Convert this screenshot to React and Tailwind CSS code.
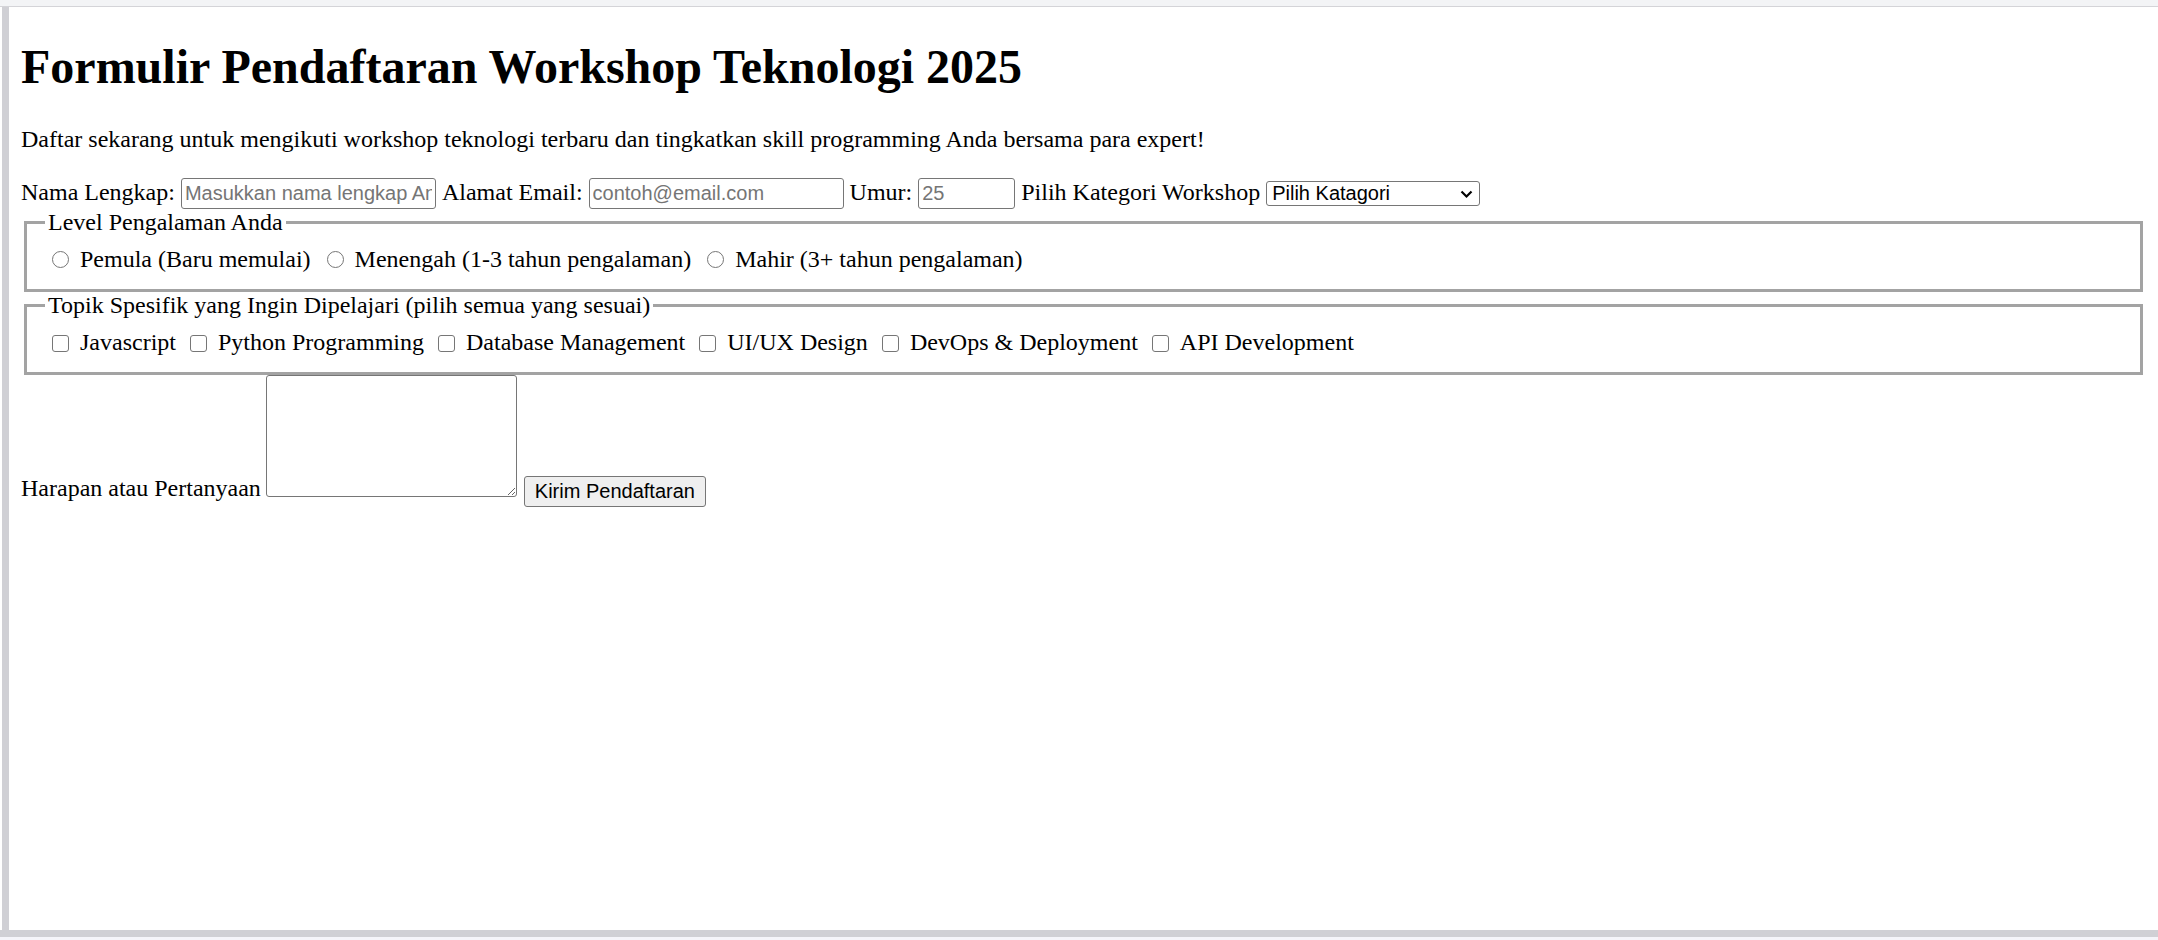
import { useState } from 'react';

const levels = [
  { id: 'pemula', label: 'Pemula (Baru memulai)' },
  { id: 'menengah', label: 'Menengah (1-3 tahun pengalaman)' },
  { id: 'mahir', label: 'Mahir (3+ tahun pengalaman)' },
];

const topics = [
  'Javascript',
  'Python Programming',
  'Database Management',
  'UI/UX Design',
  'DevOps & Deployment',
  'API Development',
];

export default function App() {
  const [level, setLevel] = useState('');
  const [picked, setPicked] = useState([]);

  const toggle = (t) =>
    setPicked((prev) => (prev.includes(t) ? prev.filter((x) => x !== t) : [...prev, t]));

  return (
    <div className="h-[940px] w-full flex flex-col bg-white overflow-hidden">
      {/* browser chrome */}
      <div className="h-[6px] bg-[#f3f4f6]" />
      <div className="h-px bg-[#d4d4d8]" />

      <div className="flex flex-1 min-h-0">
        <div className="w-[2px] bg-white" />
        <div className="w-[7px] bg-[#d0d0d5]" />

        {/* page */}
        <div className="flex-1 px-[12px] text-[24px] leading-[27.6px] text-black font-['Liberation_Serif','Times_New_Roman',serif]">
          <h1 className="mt-[32px] text-[48px] leading-[55px] font-bold">
            Formulir Pendaftaran Workshop Teknologi 2025
          </h1>
          <p className="mt-[32px]">
            Daftar sekarang untuk mengikuti workshop teknologi terbaru dan tingkatkan skill programming Anda bersama para expert!
          </p>

          <form onSubmit={(e) => e.preventDefault()}>
            {/* row 1 */}
            <div className="mt-[24px] flex items-center gap-[6px] h-[31px]">
              <label htmlFor="nama">Nama Lengkap:</label>
              <input
                id="nama"
                type="text"
                placeholder="Masukkan nama lengkap Anda"
                className="w-[255px] h-[31px] px-[3px] border border-[#767676] rounded-[3px] text-[20px] font-['Liberation_Sans',Arial,sans-serif] placeholder:text-[#757575]"
              />
              <label htmlFor="email">Alamat Email:</label>
              <input
                id="email"
                type="email"
                placeholder="contoh@email.com"
                className="w-[255px] h-[31px] px-[3px] border border-[#767676] rounded-[3px] text-[20px] font-['Liberation_Sans',Arial,sans-serif] placeholder:text-[#757575]"
              />
              <label htmlFor="umur">Umur:</label>
              <input
                id="umur"
                type="number"
                placeholder="25"
                className="w-[97px] h-[31px] px-[3px] border border-[#767676] rounded-[3px] text-[20px] font-['Liberation_Sans',Arial,sans-serif] placeholder:text-[#757575] [appearance:textfield]"
              />
              <label htmlFor="kategori">Pilih Kategori Workshop</label>
              <span className="relative inline-flex">
                <select
                  id="kategori"
                  className="w-[214px] h-[25px] appearance-none pl-[5px] pr-[24px] border border-[#767676] rounded-[3px] text-[20px] leading-[23px] font-['Liberation_Sans',Arial,sans-serif] bg-white"
                >
                  <option>Pilih Katagori</option>
                  <option>Frontend</option>
                  <option>Backend</option>
                  <option>Mobile</option>
                </select>
                <svg
                  className="absolute right-[7px] top-[9px] pointer-events-none"
                  width="13"
                  height="9"
                  viewBox="0 0 13 9"
                  fill="none"
                >
                  <path d="M1.5 1.5 L6.5 6.5 L11.5 1.5" stroke="#000" strokeWidth="2.2" />
                </svg>
              </span>
            </div>

            {/* level */}
            <fieldset className="mx-[3px] border-[3px] border-[#a3a3a3] px-[18px] pb-[15px]">
              <legend className="px-[3px]">Level Pengalaman Anda</legend>
              <div className="flex items-center pt-[10px]">
                {levels.map((l) => (
                  <span key={l.id} className="flex items-center">
                    <input
                      type="radio"
                      name="level"
                      id={l.id}
                      checked={level === l.id}
                      onChange={() => setLevel(l.id)}
                      className="appearance-none w-[17px] h-[17px] ml-[7px] mr-[5px] rounded-full border border-[#767676] bg-white checked:bg-[#0075ff]"
                    />
                    <label htmlFor={l.id} className="ml-[6px] mr-[9px]">
                      {l.label}
                    </label>
                  </span>
                ))}
              </div>
            </fieldset>

            {/* topics */}
            <fieldset className="mx-[3px] border-[3px] border-[#a3a3a3] px-[18px] pb-[15px]">
              <legend className="px-[3px]">Topik Spesifik yang Ingin Dipelajari (pilih semua yang sesuai)</legend>
              <div className="flex items-center pt-[10px]">
                {topics.map((t) => (
                  <span key={t} className="flex items-center">
                    <input
                      type="checkbox"
                      id={t}
                      checked={picked.includes(t)}
                      onChange={() => toggle(t)}
                      className="appearance-none w-[17px] h-[17px] ml-[7px] mr-[5px] rounded-[3px] border border-[#767676] bg-white checked:bg-[#0075ff]"
                    />
                    <label htmlFor={t} className="ml-[6px] mr-[7px]">
                      {t}
                    </label>
                  </span>
                ))}
              </div>
            </fieldset>

            {/* harapan */}
            <div className="flex items-start">
              <label htmlFor="harapan" className="mt-[100px] mr-[5px]">
                Harapan atau Pertanyaan
              </label>
              <textarea
                id="harapan"
                className="w-[251px] h-[122px] border border-[#767676] rounded-[3px] p-[3px] text-[20px] font-['Liberation_Mono',monospace]"
              />
              <button
                type="submit"
                className="mt-[101px] ml-[7px] w-[182px] h-[31px] bg-[#efefef] border border-[#767676] rounded-[3px] text-[20px] leading-[23px] font-['Liberation_Sans',Arial,sans-serif]"
              >
                Kirim Pendaftaran
              </button>
            </div>
          </form>
        </div>
      </div>

      <div className="h-[7px] bg-[#d0d0d5]" />
      <div className="h-[3px] bg-[#f5f5fa]" />
    </div>
  );
}
